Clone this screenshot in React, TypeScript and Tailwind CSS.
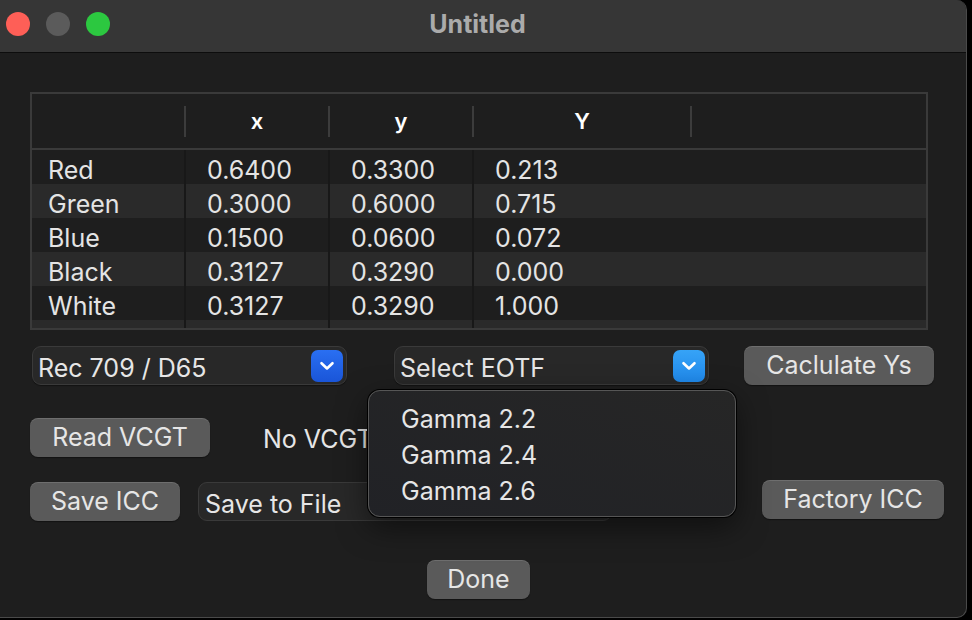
import React from 'react'

const rows = [
  ['Red', '0.6400', '0.3300', '0.213'],
  ['Green', '0.3000', '0.6000', '0.715'],
  ['Blue', '0.1500', '0.0600', '0.072'],
  ['Black', '0.3127', '0.3290', '0.000'],
  ['White', '0.3127', '0.3290', '1.000'],
]

const font = { fontFamily: 'Inter, "Liberation Sans", sans-serif' }

function Chevron() {
  return (
    <svg width="16" height="10" viewBox="0 0 16 10" fill="none">
      <path d="M2.5 2.2 8 7.5l5.5-5.3" stroke="white" strokeWidth="2.6" strokeLinecap="round" strokeLinejoin="round" />
    </svg>
  )
}

function Button({ label, className }: { label: string; className: string }) {
  return (
    <div
      className={`flex h-[39px] items-center justify-center rounded-[8px] bg-[#5a5a5a] text-[25px] text-[#e6e6e6] shadow-[inset_0_1px_0_rgba(255,255,255,0.12),0_1px_1px_rgba(0,0,0,0.4)] ${className}`}
    >
      {label}
    </div>
  )
}

function Popup({ label, blue }: { label: string; blue: string }) {
  return (
    <div className="flex h-[39px] w-[315px] items-center justify-between rounded-[9px] border border-[#3a3a3a] bg-[#282828] pl-[5px] pr-[3px] text-[25px] text-[#e6e6e6] shadow-[0_1px_1px_rgba(0,0,0,0.4)]">
      <span className="pt-[6px]">{label}</span>
      <div className={`flex h-[32px] w-[32px] items-center justify-center rounded-[7px] ${blue}`}>
        <Chevron />
      </div>
    </div>
  )
}

export default function App() {
  return (
    <div className="flex h-[620px] w-[972px] items-start bg-black" style={font}>
      <div className="flex h-[618px] w-[967px] flex-col overflow-hidden rounded-tr-[10px] rounded-br-[10px] border-r border-b border-[#4a4a4a] bg-[#1e1e1e]">
        {/* Title bar */}
        <div className="flex h-[53px] shrink-0 items-start border-b border-[#0d0d0d] bg-[#363636]">
          <div className="flex gap-[16px] pl-[6px] pt-[12px]">
            <div className="h-[24px] w-[24px] rounded-full bg-[#fe5f57]" />
            <div className="h-[24px] w-[24px] rounded-full bg-[#5b5b5b]" />
            <div className="h-[24px] w-[24px] rounded-full bg-[#2cc840]" />
          </div>
          <div className="flex flex-1 justify-center pr-[121px] pt-[6px] text-[25px] font-bold text-[#ababab]">
            Untitled
          </div>
        </div>

        <div className="flex flex-col pl-[30px] pt-[39px]">
          {/* Table */}
          <div className="flex h-[238px] w-[898px] flex-col border-2 border-[#3a3a3a] bg-[#1e1e1e]">
            <div className="grid h-[56px] shrink-0 grid-cols-[154px_144px_144px_218px_1fr] border-b-2 border-[#3a3a3a] text-[22px] font-semibold text-white">
              {['', 'x', 'y', 'Y', ''].map((h, i) => (
                <div key={i} className="flex items-center">
                  <div className="flex-1 pt-[1px] text-center">{h}</div>
                  {i < 4 && <div className="h-[31px] w-[2px] bg-[#3c3c3c]" />}
                </div>
              ))}
            </div>
            {rows.map((r, i) => (
              <div
                key={r[0]}
                className={`grid h-[34px] shrink-0 grid-cols-[154px_144px_144px_218px_1fr] text-[25px] leading-[34px] text-[#e4e4e4] ${i % 2 ? 'bg-[#2a2a2a]' : 'bg-[#1e1e1e]'}`}
              >
                <div className="border-r-2 border-[#181818] pl-[16px] pt-[3px]">{r[0]}</div>
                <div className="border-r-2 border-[#181818] pl-[21px] pt-[3px]">{r[1]}</div>
                <div className="border-r-2 border-[#181818] pl-[21px] pt-[3px]">{r[2]}</div>
                <div className="pl-[21px] pt-[3px]">{r[3]}</div>
                <div />
              </div>
            ))}
            <div className="grid flex-1 grid-cols-[154px_144px_144px_218px_1fr] bg-[#2a2a2a]">
              <div className="border-r-2 border-[#181818]" />
              <div className="border-r-2 border-[#181818]" />
              <div className="border-r-2 border-[#181818]" />
              <div />
              <div />
            </div>
          </div>

          {/* Popups row */}
          <div className="mt-[16px] flex h-[39px] items-center">
            <div className="ml-[2px]">
              <Popup label="Rec 709 / D65" blue="bg-gradient-to-b from-[#2a6ff2] to-[#1a55d8]" />
            </div>
            <div className="relative ml-[47px]">
              <Popup label="Select EOTF" blue="bg-gradient-to-b from-[#36a3f7] to-[#1f88ea]" />
              <div className="absolute left-[-26px] top-[44px] z-10 flex h-[127px] w-[368px] flex-col rounded-[12px] border border-[#565656] bg-gradient-to-tr from-[#212226] to-[#262626] pl-[32px] pt-[10px] text-[25px] text-[#e6e6e6] shadow-[0_0_0_1px_#000,0_10px_30px_rgba(0,0,0,0.5)]">
                <div className="h-[36px] leading-[36px]">Gamma 2.2</div>
                <div className="h-[36px] leading-[36px]">Gamma 2.4</div>
                <div className="h-[36px] leading-[36px]">Gamma 2.6</div>
              </div>
            </div>
            <Button label="Caclulate Ys" className="ml-[35px] w-[190px]" />
          </div>

          {/* VCGT row */}
          <div className="mt-[33px] flex h-[39px] items-center">
            <Button label="Read VCGT" className="w-[180px]" />
            <span className="ml-[53px] pt-[4px] text-[25px] text-[#e6e6e6]">No VCGT</span>
          </div>

          {/* ICC row */}
          <div className="mt-[25px] flex h-[39px] items-start">
            <Button label="Save ICC" className="w-[150px]" />
            <div className="ml-[18px] flex h-[39px] w-[414px] items-center rounded-[9px] border border-[#3a3a3a] bg-[#282828] pl-[6px] pt-[6px] text-[25px] text-[#e6e6e6]">
              Save to File
            </div>
            <Button label="Factory ICC" className="-mt-[2px] ml-[150px] w-[182px]" />
          </div>

          {/* Done */}
          <div className="mt-[39px] flex">
            <Button label="Done" className="ml-[397px] w-[103px]" />
          </div>
        </div>
      </div>
    </div>
  )
}
